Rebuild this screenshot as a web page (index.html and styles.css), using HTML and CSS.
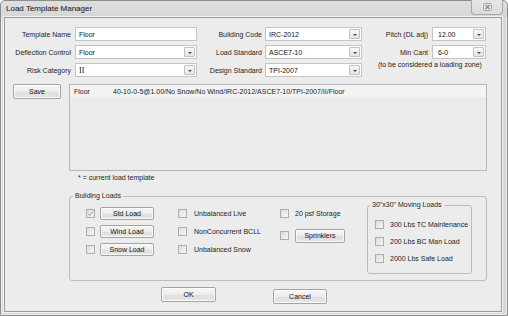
FILE: index.html
```html
<!DOCTYPE html>
<html lang="en">
<head>
    <meta charset="UTF-8">
    <title>Load Template Manager</title>
    <link rel="stylesheet" href="styles.css">
</head>
<body>
    <div class="window">
        <div class="titlebar">
            <span class="title">Load Template Manager</span>
            <div class="close">
                <svg width="9" height="8" viewBox="0 0 9 8">
                    <rect x="0.5" y="0.5" width="8" height="7" rx="1" fill="#e4e4e4" stroke="#a8a8a8"/>
                    <path d="M2.5 2 L6.5 6 M6.5 2 L2.5 6" stroke="#8a8a8a" stroke-width="1.2"/>
                </svg>
            </div>
        </div>
        <div class="client">
            <div class="form">
                <label class="lbl">Template Name</label>
                <div class="field"><span class="val">Floor</span></div>
                <label class="lbl">Building Code</label>
                <div class="field combo"><span class="val">IRC-2012</span><span class="drop"></span></div>
                <label class="lbl">Pitch (DL adj)</label>
                <div class="field combo"><span class="val pad">12.00</span><span class="drop"></span></div>

                <label class="lbl">Deflection Control</label>
                <div class="field combo"><span class="val">Floor</span><span class="drop"></span></div>
                <label class="lbl">Load Standard</label>
                <div class="field combo"><span class="val">ASCE7-10</span><span class="drop"></span></div>
                <label class="lbl">Min Cant</label>
                <div class="field combo"><span class="val pad">6-0</span><span class="drop"></span></div>

                <label class="lbl">Risk Category</label>
                <div class="field combo"><span class="val roman">II</span><span class="drop"></span></div>
                <label class="lbl">Design Standard</label>
                <div class="field combo"><span class="val">TPI-2007</span><span class="drop"></span></div>
                <div class="hint">(to be considered a loading zone)</div>
            </div>

            <div class="templates">
                <div class="side">
                    <div class="btn save">Save</div>
                </div>
                <div class="list">
                    <div class="row current">
                        <span class="name">Floor</span>
                        <span>40-10-0-5@1.00/No Snow/No Wind/IRC-2012/ASCE7-10/TPI-2007/II/Floor</span>
                    </div>
                </div>
            </div>
            <div class="note">* = current load template</div>

            <fieldset class="group loads">
                <legend>Building Loads</legend>
                <div class="col col-a">
                    <div class="item"><span class="check on"><svg width="7" height="7" viewBox="0 0 7 7"><path d="M1 3.6 L2.8 5.4 L6 1.2" fill="none" stroke="#9c9c9c" stroke-width="1"/></svg></span><div class="btn load">Std Load</div></div>
                    <div class="item"><span class="check"></span><div class="btn load">Wind Load</div></div>
                    <div class="item"><span class="check"></span><div class="btn load">Snow Load</div></div>
                </div>
                <div class="col col-b">
                    <div class="item"><span class="check"></span><span class="text">Unbalanced Live</span></div>
                    <div class="item"><span class="check"></span><span class="text">NonConcurrent BCLL</span></div>
                    <div class="item"><span class="check"></span><span class="text">Unbalanced Snow</span></div>
                </div>
                <div class="col col-c">
                    <div class="item"><span class="check"></span><span class="text">20 psf Storage</span></div>
                    <div class="item"><span class="check"></span><div class="btn sprink">Sprinklers</div></div>
                </div>
                <fieldset class="group moving">
                    <legend>30"x30" Moving Loads</legend>
                    <div class="item"><span class="check"></span><span class="text">300 Lbs TC Maintenance</span></div>
                    <div class="item"><span class="check"></span><span class="text">200 Lbs BC Man Load</span></div>
                    <div class="item"><span class="check"></span><span class="text">2000 Lbs Safe Load</span></div>
                </fieldset>
            </fieldset>

            <div class="actions">
                <div class="btn ok">OK</div>
                <div class="btn cancel">Cancel</div>
            </div>
        </div>
    </div>
</body>
</html>
```

FILE: styles.css
```css
* {
    margin: 0;
    padding: 0;
    box-sizing: border-box;
}
body {
    width: 508px;
    height: 316px;
    overflow: hidden;
    background: #ffffff;
    font-family: "Liberation Sans", Arial, sans-serif;
    font-size: 7px;
    color: #1c1c1c;
}
.window {
    width: 508px;
    height: 316px;
    background: #d7d7d7;
    border: 1px solid #8c8c8c;
    border-radius: 5px 5px 0 0;
    box-shadow: inset 1px 0 0 #ededed, inset -1px 0 0 #ededed, inset 0 -1px 0 #ededed;
}
.titlebar {
    height: 16px;
    display: flex;
    justify-content: space-between;
    align-items: flex-start;
    background: linear-gradient(#dedede, #d6d6d6);
    border-radius: 5px 5px 0 0;
}
.title {
    font-size: 8px;
    line-height: 16px;
    padding-left: 5px;
    color: #111;
}
.close {
    width: 32px;
    height: 15px;
    margin-top: -1px;
    margin-right: 4px;
    border: 1px solid #a8a8a8;
    border-top: none;
    border-radius: 0 0 4px 4px;
    background: linear-gradient(#e6e6e6, #dcdcdc);
    display: flex;
    justify-content: center;
    align-items: center;
}
.client {
    height: 295px;
    margin: 0 5px 0 3px;
    background: #ececec;
    border: 1px solid #9b9b9b;
    box-shadow: 0 0 0 1px #f2f2f2;
}

/* top fields */
.form {
    display: grid;
    grid-template-columns: 70px 122px 68px 97px 70px 54px;
    grid-auto-rows: 14px;
    row-gap: 4px;
    padding-top: 9px;
    align-items: center;
}
.lbl {
    text-align: right;
    white-space: nowrap;
    padding-right: 4px;
}
.form .lbl:nth-child(6n+3) {
    padding-right: 3px;
}
.field {
    height: 14px;
    background: #fff;
    border: 1px solid #c4c4c4;
    display: flex;
    align-items: center;
    justify-content: space-between;
}
.val {
    padding-left: 3px;
    color: #111;
}
.val.pad {
    padding-left: 5px;
}
.val.roman {
    font-family: "Liberation Serif", serif;
    font-size: 8px;
}
.drop {
    width: 11px;
    height: 10px;
    margin-right: 1px;
    border: 1px solid #c2c2c2;
    border-radius: 1px;
    background: linear-gradient(#f7f7f7, #e4e4e4);
    display: flex;
    justify-content: center;
    align-items: center;
}
.drop::after {
    content: "";
    border-left: 2px solid transparent;
    border-right: 2px solid transparent;
    border-top: 2px solid #4a4a4a;
    margin-top: 1px;
}
.hint {
    grid-column: 5 / 7;
    align-self: start;
    margin-top: -2px;
    padding-left: 16px;
    white-space: nowrap;
}

/* buttons */
.btn {
    height: 15px;
    display: flex;
    justify-content: center;
    align-items: center;
    border: 1px solid #a3a3a3;
    border-radius: 2px;
    background: linear-gradient(#f6f6f6, #ececec 50%, #dedede 51%, #e6e6e6);
    box-shadow: inset 0 0 0 1px #fbfbfb;
    color: #111;
}

/* template list */
.templates {
    display: flex;
    margin-top: 7px;
}
.side {
    width: 64px;
    padding-left: 8px;
}
.save {
    width: 48px;
}
.list {
    width: 418px;
    height: 87px;
    border: 1px solid #b7b7b7;
    background: #ebebeb;
}
.row {
    display: flex;
    height: 12px;
    align-items: center;
    padding-left: 4px;
}
.row.current {
    background: #f3f3f3;
}
.row .name {
    width: 39px;
}
.note {
    margin-top: 2px;
    line-height: 10px;
    padding-left: 73px;
}

/* group boxes */
.group {
    border: 1px solid #bcbcbc;
    border-radius: 3px;
    min-inline-size: 0;
}
.group legend {
    line-height: 8px;
    padding: 0 2px;
}
.loads {
    width: 418px;
    height: 89px;
    margin: 9px 0 0 64px;
    padding: 1px 0 0 16px;
    display: flex;
    align-items: flex-start;
}
.loads > legend {
    margin-left: -13px;
}
.col {
    display: flex;
    flex-direction: column;
    padding-top: 6px;
}
.col-a {
    width: 92px;
    gap: 5px;
}
.col-b {
    width: 102px;
    gap: 5px;
}
.col-c {
    width: 87px;
    gap: 9px;
}
.item {
    display: flex;
    align-items: center;
    height: 13px;
    white-space: nowrap;
}
.check {
    width: 9px;
    height: 9px;
    flex: none;
    border: 1px solid #adadad;
    background: linear-gradient(135deg, #dcdcdc, #f6f6f6);
    display: flex;
    justify-content: center;
    align-items: center;
}
.col-a .check {
    margin-right: 5px;
}
.col-b .check {
    margin-right: 7px;
}
.col-c .check {
    margin-right: 6px;
}
.load {
    width: 54px;
    height: 13px;
}
.sprink {
    width: 50px;
    height: 14px;
}
.moving {
    width: 105px;
    height: 73px;
    padding: 10px 0 0 7px;
    display: flex;
    flex-direction: column;
    gap: 7px;
}
.moving > legend {
    margin-left: -5px;
}
.moving .item {
    height: 10px;
}
.moving .check {
    margin-right: 6px;
}

/* bottom buttons */
.actions {
    display: flex;
    align-items: flex-start;
    gap: 57px;
    margin-top: 6px;
    padding-left: 156px;
}
.ok {
    width: 55px;
}
.cancel {
    width: 54px;
    margin-top: 2px;
}
```
